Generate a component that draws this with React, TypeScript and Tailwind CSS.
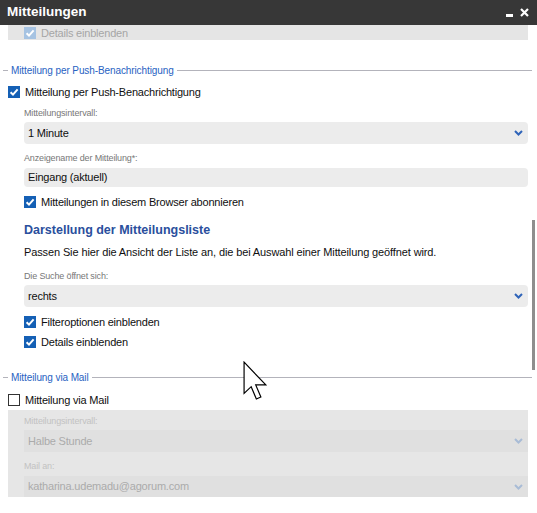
import React from 'react';

const FONT = "font-['Liberation_Sans','Arial',sans-serif]";

function Check({ state }: { state: 'on' | 'off' | 'disabled' }) {
  if (state === 'off') {
    return <span className="block h-[12px] w-[12px] flex-shrink-0 border border-[#333] bg-white" />;
  }
  return (
    <span
      className={`flex h-[12px] w-[12px] flex-shrink-0 items-center justify-center ${
        state === 'on' ? 'bg-[#1560b5]' : 'bg-[#a6c3e2]'
      }`}
    >
      <svg width="10" height="10" viewBox="0 0 10 10">
        <path d="M1.6 5.2 L4 7.6 L8.6 2.4" fill="none" stroke="#fff" strokeWidth="2" />
      </svg>
    </span>
  );
}

function CheckRow({ label, state, className = '' }: { label: string; state: 'on' | 'off' | 'disabled'; className?: string }) {
  return (
    <div className={`flex h-[14px] items-center gap-[5px] ${className}`}>
      <Check state={state} />
      <span
        className={`text-[11px] leading-[14px] tracking-[-0.2px] ${
          state === 'disabled' ? 'text-[#a5a5a5]' : 'text-[#0f0f0f]'
        }`}
      >
        {label}
      </span>
    </div>
  );
}

function Label({ text, className = '', muted = false }: { text: string; className?: string; muted?: boolean }) {
  return (
    <div
      className={`h-[12px] text-[9px] leading-[12px] tracking-[-0.15px] ${
        muted ? 'text-[#c2c2c2]' : 'text-[#777]'
      } ${className}`}
    >
      {text}
    </div>
  );
}

function Chevron({ muted = false }: { muted?: boolean }) {
  return (
    <svg width="9" height="6" viewBox="0 0 9 6">
      <path d="M1 1 L4.5 4.5 L8 1" fill="none" stroke={muted ? '#a9bcd6' : '#2f64b9'} strokeWidth="2" />
    </svg>
  );
}

function Select({
  value,
  className = '',
  muted = false,
  h = 'h-[22px]',
  chevron = true,
}: {
  value: string;
  className?: string;
  muted?: boolean;
  h?: string;
  chevron?: boolean;
}) {
  return (
    <div
      className={`flex ${h} items-center justify-between pl-[4px] pr-[5px] ${
        muted ? 'bg-[#e0e0e0]' : 'rounded-[4px] bg-[#ececec]'
      } ${className}`}
    >
      <span
        className={`text-[11px] tracking-[-0.2px] ${muted ? 'text-[#ababab]' : 'text-[#0f0f0f]'}`}
      >
        {value}
      </span>
      {chevron && <Chevron muted={muted} />}
    </div>
  );
}

function Legend({ text, className = '' }: { text: string; className?: string }) {
  return (
    <div className={`flex h-[14px] items-center ${className}`}>
      <span className="ml-[3px] h-px w-[5px] bg-[#b3b3bb]" />
      <span className="px-[3px] text-[10px] tracking-[-0.1px] text-[#2762c2]">{text}</span>
      <span className="h-px flex-1 bg-[#b3b3bb]" />
    </div>
  );
}

function Cursor() {
  return (
    <svg
      className="pointer-events-none absolute left-[243px] top-[361px]"
      width="28"
      height="41"
      viewBox="0 0 13 19"
    >
      <path
        d="M0.5 0.5 L0.5 15 L3.8 11.9 L6.2 17.6 L8.3 16.7 L5.9 11.1 L10.6 11.1 Z"
        fill="#fff"
        stroke="#000"
        strokeWidth="0.55"
        strokeLinejoin="miter"
      />
    </svg>
  );
}

export default function App() {
  return (
    <div className={`relative h-[513px] w-[537px] overflow-hidden bg-white ${FONT}`}>
      <div className="flex h-[25px] items-center justify-between bg-[#373737] pl-[7px] pr-[8px]">
        <span className="text-[13.5px] font-bold text-white">Mitteilungen</span>
        <div className="flex items-center gap-[7px]">
          <span className="mt-[5px] block h-[3px] w-[7px] bg-white" />
          <svg width="9" height="9" viewBox="0 0 9 9">
            <path d="M1 1 L8 8 M8 1 L1 8" stroke="#fff" strokeWidth="2.2" />
          </svg>
        </div>
      </div>

      <div className="flex">
        <div className="w-[532px]">
          <div className="ml-[8px] mr-[4px] h-[15px] bg-[#e5e5e5] pl-[16px] pt-[1px]">
            <CheckRow label="Details einblenden" state="disabled" />
          </div>

          <Legend text="Mitteilung per Push-Benachrichtigung" className="mt-[23px]" />
          <CheckRow label="Mitteilung per Push-Benachrichtigung" state="on" className="mt-[8px] pl-[8px]" />

          <div className="pl-[24px] pr-[4px]">
            <Label text="Mitteilungsintervall:" className="mt-[8px]" />
            <Select value="1 Minute" className="mt-[3px]" />
            <Label text="Anzeigename der Mitteilung*:" className="mt-[8px]" />
            <Select value="Eingang (aktuell)" className="mt-[4px]" h="h-[19px]" chevron={false} />
            <CheckRow label="Mitteilungen in diesem Browser abonnieren" state="on" className="mt-[8px]" />

            <h2 className="mt-[12px] h-[18px] text-[12.5px] font-bold leading-[18px] text-[#2a4f9d]">
              Darstellung der Mitteilungsliste
            </h2>
            <p className="mt-[6px] h-[14px] text-[11px] leading-[14px] tracking-[-0.12px] text-[#0f0f0f]">
              Passen Sie hier die Ansicht der Liste an, die bei Auswahl einer Mitteilung geöffnet wird.
            </p>
            <Label text="Die Suche öffnet sich:" className="mt-[11px]" />
            <Select value="rechts" className="mt-[3px]" />
            <CheckRow label="Filteroptionen einblenden" state="on" className="mt-[8px]" />
            <CheckRow label="Details einblenden" state="on" className="mt-[6px]" />
          </div>

          <Legend text="Mitteilung via Mail" className="mt-[21px]" />
          <CheckRow label="Mitteilung via Mail" state="off" className="mt-[9px] pl-[8px]" />

          <div className="ml-[8px] mr-[4px] mt-[3px] h-[87px] bg-[#e6e6e6] pl-[16px] pt-[5px]">
            <Label text="Mitteilungsintervall:" muted />
            <Select value="Halbe Stunde" className="mt-[3px]" muted />
            <Label text="Mail an:" className="mt-[8px]" muted />
            <Select value="katharina.udemadu@agorum.com" className="mt-[4px]" h="h-[21px]" muted />
          </div>
        </div>

        <div className="w-[5px]">
          <div className="mt-[195px] h-[150px] w-[3px] bg-[#8e8e8e]" />
        </div>
      </div>

      <Cursor />
    </div>
  );
}
